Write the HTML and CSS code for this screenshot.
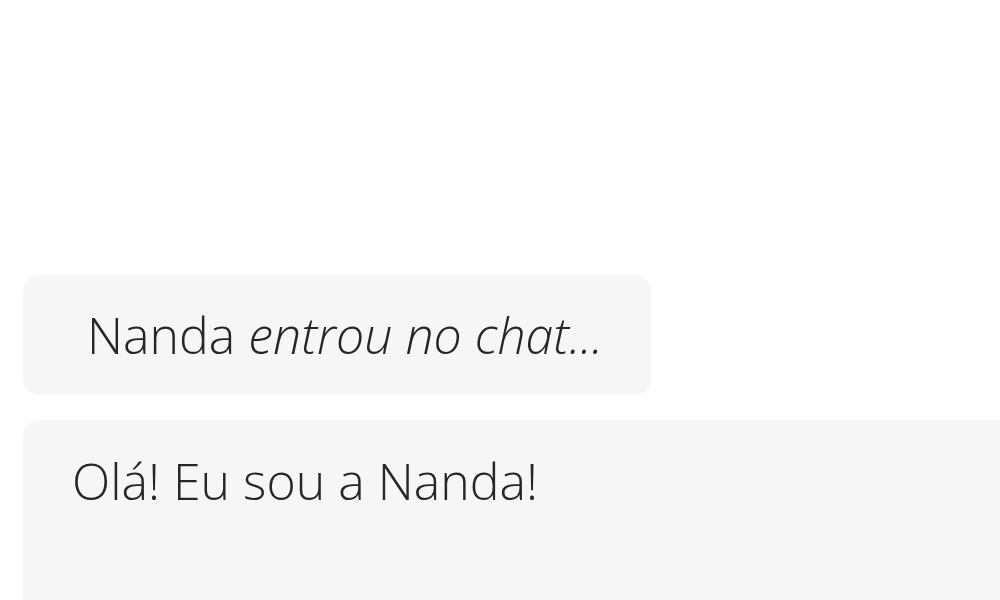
FILE: index.html
```html
<!DOCTYPE html>
<html lang="pt">
<head>
<meta charset="utf-8">
<link rel="stylesheet" href="styles.css">
</head>
<body>
<main class="chat">
  <div class="notice"><span class="notice-text">Nanda <em>entrou no chat...</em></span></div>
  <div class="message">
    <p class="message-text">Olá! Eu sou a Nanda!</p>
  </div>
</main>
</body>
</html>
```
FILE: styles.css
```css
html, body {
  margin: 0;
  padding: 0;
  background: #ffffff;
  overflow: hidden;
  width: 1000px;
  height: 600px;
}
.chat {
  display: flex;
  flex-direction: column;
  gap: 25px;
  padding: 275px 0 0 23px;
  font-family: "Open Sans", "Noto Sans", sans-serif;
  font-weight: 320;
  color: #262626;
}
.notice {
  width: 628px;
  height: 120px;
  box-sizing: border-box;
  background: #f6f6f6;
  border-radius: 16px;
  display: flex;
  align-items: center;
  padding-left: 64px;
}
.notice-text {
  font-size: 50px;
  line-height: 1;
  white-space: nowrap;
}
.notice-text em {
  font-style: italic;
}
.message {
  width: 1000px;
  height: 300px;
  box-sizing: border-box;
  background: #f6f6f6;
  border-radius: 16px;
  padding: 27px 0 0 49px;
}
.message-text {
  margin: 0;
  font-size: 50px;
  line-height: 1.362;
  white-space: nowrap;
}
```
